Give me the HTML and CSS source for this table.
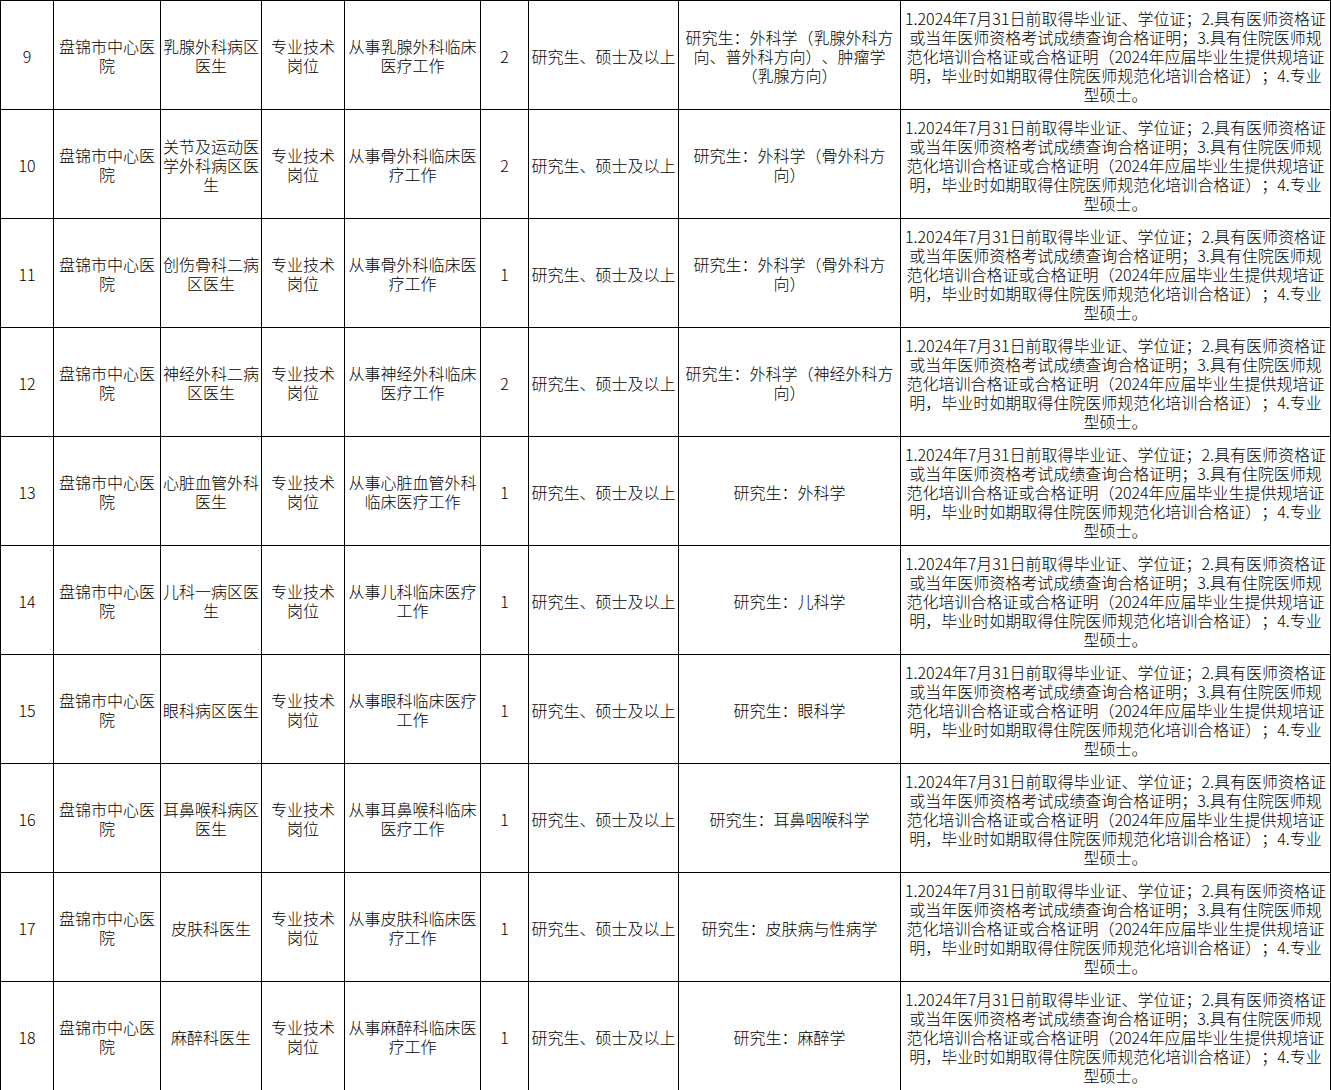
FILE: index.html
```html
<!DOCTYPE html>
<html lang="zh-CN">
<head>
<meta charset="utf-8">
<title>岗位表</title>
<link rel="stylesheet" href="styles.css">
</head>
<body>
<table class="jobs">
  <colgroup>
    <col class="c-no"><col class="c-unit"><col class="c-post"><col class="c-type"><col class="c-duty"><col class="c-num"><col class="c-edu"><col class="c-major"><col class="c-req">
  </colgroup>
  <tbody>
    <tr><td>9</td><td>盘锦市中心医院</td><td>乳腺外科病区医生</td><td>专业技术岗位</td><td>从事乳腺外科临床医疗工作</td><td>2</td><td>研究生、硕士及以上</td><td>研究生：外科学（乳腺外科方向、普外科方向）、肿瘤学（乳腺方向）</td><td>1.2024年7月31日前取得毕业证、学位证；2.具有医师资格证或当年医师资格考试成绩查询合格证明；3.具有住院医师规范化培训合格证或合格证明（2024年应届毕业生提供规培证明，毕业时如期取得住院医师规范化培训合格证）；4.专业型硕士。</td></tr>
    <tr><td>10</td><td>盘锦市中心医院</td><td>关节及运动医学外科病区医生</td><td>专业技术岗位</td><td>从事骨外科临床医疗工作</td><td>2</td><td>研究生、硕士及以上</td><td>研究生：外科学（骨外科方向）</td><td>1.2024年7月31日前取得毕业证、学位证；2.具有医师资格证或当年医师资格考试成绩查询合格证明；3.具有住院医师规范化培训合格证或合格证明（2024年应届毕业生提供规培证明，毕业时如期取得住院医师规范化培训合格证）；4.专业型硕士。</td></tr>
    <tr><td>11</td><td>盘锦市中心医院</td><td>创伤骨科二病区医生</td><td>专业技术岗位</td><td>从事骨外科临床医疗工作</td><td>1</td><td>研究生、硕士及以上</td><td>研究生：外科学（骨外科方向）</td><td>1.2024年7月31日前取得毕业证、学位证；2.具有医师资格证或当年医师资格考试成绩查询合格证明；3.具有住院医师规范化培训合格证或合格证明（2024年应届毕业生提供规培证明，毕业时如期取得住院医师规范化培训合格证）；4.专业型硕士。</td></tr>
    <tr><td>12</td><td>盘锦市中心医院</td><td>神经外科二病区医生</td><td>专业技术岗位</td><td>从事神经外科临床医疗工作</td><td>2</td><td>研究生、硕士及以上</td><td>研究生：外科学（神经外科方向）</td><td>1.2024年7月31日前取得毕业证、学位证；2.具有医师资格证或当年医师资格考试成绩查询合格证明；3.具有住院医师规范化培训合格证或合格证明（2024年应届毕业生提供规培证明，毕业时如期取得住院医师规范化培训合格证）；4.专业型硕士。</td></tr>
    <tr><td>13</td><td>盘锦市中心医院</td><td>心脏血管外科医生</td><td>专业技术岗位</td><td>从事心脏血管外科临床医疗工作</td><td>1</td><td>研究生、硕士及以上</td><td>研究生：外科学</td><td>1.2024年7月31日前取得毕业证、学位证；2.具有医师资格证或当年医师资格考试成绩查询合格证明；3.具有住院医师规范化培训合格证或合格证明（2024年应届毕业生提供规培证明，毕业时如期取得住院医师规范化培训合格证）；4.专业型硕士。</td></tr>
    <tr><td>14</td><td>盘锦市中心医院</td><td>儿科一病区医生</td><td>专业技术岗位</td><td>从事儿科临床医疗工作</td><td>1</td><td>研究生、硕士及以上</td><td>研究生：儿科学</td><td>1.2024年7月31日前取得毕业证、学位证；2.具有医师资格证或当年医师资格考试成绩查询合格证明；3.具有住院医师规范化培训合格证或合格证明（2024年应届毕业生提供规培证明，毕业时如期取得住院医师规范化培训合格证）；4.专业型硕士。</td></tr>
    <tr><td>15</td><td>盘锦市中心医院</td><td>眼科病区医生</td><td>专业技术岗位</td><td>从事眼科临床医疗工作</td><td>1</td><td>研究生、硕士及以上</td><td>研究生：眼科学</td><td>1.2024年7月31日前取得毕业证、学位证；2.具有医师资格证或当年医师资格考试成绩查询合格证明；3.具有住院医师规范化培训合格证或合格证明（2024年应届毕业生提供规培证明，毕业时如期取得住院医师规范化培训合格证）；4.专业型硕士。</td></tr>
    <tr><td>16</td><td>盘锦市中心医院</td><td>耳鼻喉科病区医生</td><td>专业技术岗位</td><td>从事耳鼻喉科临床医疗工作</td><td>1</td><td>研究生、硕士及以上</td><td>研究生：耳鼻咽喉科学</td><td>1.2024年7月31日前取得毕业证、学位证；2.具有医师资格证或当年医师资格考试成绩查询合格证明；3.具有住院医师规范化培训合格证或合格证明（2024年应届毕业生提供规培证明，毕业时如期取得住院医师规范化培训合格证）；4.专业型硕士。</td></tr>
    <tr><td>17</td><td>盘锦市中心医院</td><td>皮肤科医生</td><td>专业技术岗位</td><td>从事皮肤科临床医疗工作</td><td>1</td><td>研究生、硕士及以上</td><td>研究生：皮肤病与性病学</td><td>1.2024年7月31日前取得毕业证、学位证；2.具有医师资格证或当年医师资格考试成绩查询合格证明；3.具有住院医师规范化培训合格证或合格证明（2024年应届毕业生提供规培证明，毕业时如期取得住院医师规范化培训合格证）；4.专业型硕士。</td></tr>
    <tr><td>18</td><td>盘锦市中心医院</td><td>麻醉科医生</td><td>专业技术岗位</td><td>从事麻醉科临床医疗工作</td><td>1</td><td>研究生、硕士及以上</td><td>研究生：麻醉学</td><td>1.2024年7月31日前取得毕业证、学位证；2.具有医师资格证或当年医师资格考试成绩查询合格证明；3.具有住院医师规范化培训合格证或合格证明（2024年应届毕业生提供规培证明，毕业时如期取得住院医师规范化培训合格证）；4.专业型硕士。</td></tr>
  </tbody>
</table>
</body>
</html>
```

FILE: styles.css
```css
html, body {
  margin: 0;
  padding: 0;
  background: #fff;
  overflow: hidden;
}

.jobs {
  border-collapse: collapse;
  table-layout: fixed;
  width: 1330px;
  font-family: "Noto Sans CJK SC", "Noto Sans CJK JP", sans-serif;
  font-size: 16px;
  font-weight: 300;
  line-height: 19px;
  color: #000;
  text-spacing-trim: space-all;
  font-kerning: none;
}

.c-no { width: 53px; }
.c-unit { width: 107px; }
.c-post { width: 101px; }
.c-type { width: 83px; }
.c-duty { width: 136px; }
.c-num { width: 48px; }
.c-edu { width: 150px; }
.c-major { width: 222px; }
.c-req { width: 430px; }

.jobs td {
  border: 1px solid #000;
  height: 109px;
  padding: 2px 2px 0 2px;
  box-sizing: border-box;
  text-align: center;
  vertical-align: middle;
  word-break: break-all;
}
```
